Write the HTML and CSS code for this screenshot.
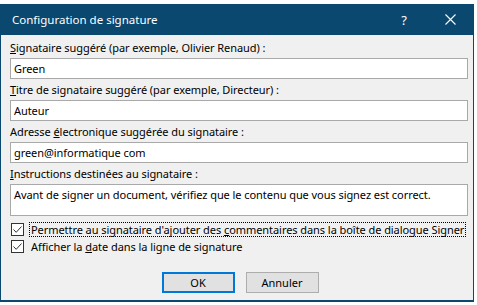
FILE: index.html
```html
<!DOCTYPE html>
<html lang="fr">
<head>
    <meta charset="UTF-8">
    <title>Configuration de signature</title>
    <link rel="stylesheet" href="styles.css">
</head>
<body>
    <div class="dialog">
        <div class="titlebar">
            <span class="title">Configuration de signature</span>
            <span class="title-btn help">?</span>
            <span class="title-btn close">
                <svg width="11" height="11" viewBox="0 0 11 11">
                    <path d="M0.5 0.5 L10.5 10.5 M10.5 0.5 L0.5 10.5" stroke="#fff" stroke-width="1.1" fill="none"/>
                </svg>
            </span>
        </div>
        <div class="content">
            <div class="field-label"><u>S</u>ignataire suggéré (par exemple, Olivier Renaud) :</div>
            <div class="input">Green</div>

            <div class="field-label"><u>T</u>itre de signataire suggéré (par exemple, Directeur) :</div>
            <div class="input">Auteur</div>

            <div class="field-label">Adresse <u>é</u>lectronique suggérée du signataire :</div>
            <div class="input">green@informatique com</div>

            <div class="field-label"><u>I</u>nstructions destinées au signataire :</div>
            <div class="textarea">Avant de signer un document, vérifiez que le contenu que vous signez est correct.</div>

            <div class="check-row">
                <span class="checkbox">
                    <svg width="11" height="11" viewBox="0 0 11 11">
                        <path d="M1.5 5.5 L4.2 8.3 L9.5 2.5" stroke="#333" stroke-width="1" fill="none"/>
                    </svg>
                </span>
                <span class="check-label focused">Permettre au signataire d'ajouter des <u>c</u>ommentaires dans la boîte de dialogue Signer</span>
            </div>
            <div class="check-row">
                <span class="checkbox">
                    <svg width="11" height="11" viewBox="0 0 11 11">
                        <path d="M1.5 5.5 L4.2 8.3 L9.5 2.5" stroke="#333" stroke-width="1" fill="none"/>
                    </svg>
                </span>
                <span class="check-label">Afficher la <u>d</u>ate dans la ligne de signature</span>
            </div>

            <div class="buttons">
                <button class="btn btn-default">OK</button>
                <button class="btn">Annuler</button>
            </div>
        </div>
    </div>
</body>
</html>
```
FILE: styles.css
```css
body {
    margin: 0;
    background-color: #fff;
    font-family: "Noto Sans", "Open Sans", sans-serif;
    font-size: 11px;
    letter-spacing: -0.06px;
    color: #000;
}
.dialog {
    box-sizing: border-box;
    width: 474px;
    height: 298px;
    margin-top: 4px;
    border: 1px solid #0a4870;
    border-top: none;
    border-bottom-width: 2px;
    background-color: #f0f0f0;
}
.titlebar {
    display: flex;
    align-items: center;
    height: 31px;
    margin: 0 -1px;
    padding-left: 12px;
    background-color: #0a4870;
    color: #fff;
}
.title {
    flex: 1;
    font-size: 11.5px;
    letter-spacing: 0;
}
.title-btn {
    display: flex;
    align-items: center;
    justify-content: center;
    width: 46px;
    height: 31px;
}
.help {
    font-size: 13px;
}
.close {
    margin-right: 1px;
}
.content {
    padding: 2px 5px 0 9px;
}
.field-label {
    height: 21px;
    line-height: 21px;
    white-space: nowrap;
}
.input {
    box-sizing: border-box;
    height: 21px;
    padding: 0 3px;
    line-height: 19px;
    border: 1px solid #a9a9a9;
    background-color: #fff;
}
.textarea {
    box-sizing: border-box;
    height: 32px;
    padding: 1px 3px 0;
    line-height: 17px;
    border: 1px solid #a9a9a9;
    background-color: #fff;
    white-space: nowrap;
}
.check-row {
    display: flex;
    align-items: center;
    height: 15px;
    margin-top: 2px;
}
.textarea + .check-row {
    margin-top: 6px;
}
.checkbox {
    box-sizing: border-box;
    display: flex;
    align-items: center;
    justify-content: center;
    width: 13px;
    height: 13px;
    margin-left: 1px;
    border: 1px solid #333;
    background-color: #fff;
}
.check-label {
    box-sizing: border-box;
    height: 15px;
    line-height: 13px;
    margin-left: 5px;
    padding: 0 1px;
    border: 1px solid transparent;
    white-space: nowrap;
}
.check-label.focused {
    border: 1px dotted #000;
}
.buttons {
    display: flex;
    justify-content: center;
    gap: 11px;
    margin-top: 18px;
    padding-left: 2px;
}
.btn {
    box-sizing: border-box;
    width: 73px;
    height: 21px;
    padding: 0;
    font-family: inherit;
    font-size: 11px;
    color: #000;
    background-color: #e1e1e1;
    border: 1px solid #adadad;
    border-radius: 0;
}
.btn-default {
    border: 2px solid #0078d7;
}
```
